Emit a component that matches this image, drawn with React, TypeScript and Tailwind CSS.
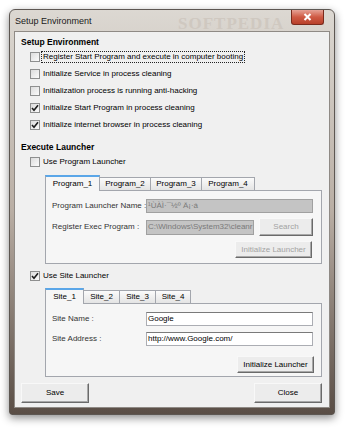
import { ReactNode } from 'react';

const Check = ({ checked }: { checked?: boolean }) => (
    <span className="relative flex size-[10px] shrink-0 items-center justify-center border border-[#8e8f8f] bg-gradient-to-br from-[#dcdcdc] to-[#fbfbfb]">
        {checked && (
            <svg width="8" height="8" viewBox="0 0 8 8" className="absolute">
                <path d="M1 4 L3 6.2 L7 1.2" fill="none" stroke="#1c1c1c" strokeWidth="1.6" />
            </svg>
        )}
    </span>
);

const CheckRow = ({
    label,
    checked,
    focus,
}: {
    label: string;
    checked?: boolean;
    focus?: boolean;
}) => (
    <div className="flex h-[17px] items-center gap-[1px] whitespace-nowrap pl-[15px]">
        <Check checked={checked} />
        <span
            className={
                focus
                    ? 'border border-dotted border-[#222] px-px leading-[10px]'
                    : 'border border-transparent px-px leading-[10px]'
            }
        >
            {label}
        </span>
    </div>
);

const Button = ({
    children,
    disabled,
    className,
}: {
    children: ReactNode;
    disabled?: boolean;
    className: string;
}) => (
    <div
        className={`flex shrink-0 items-center justify-center whitespace-nowrap border border-t-[#f8f8f8] border-l-[#f8f8f8] border-b-[#6a6a6a] border-r-[#6a6a6a] bg-[#ececec] shadow-[inset_-1px_-1px_0_#a8a8a8] ${
            disabled ? 'text-[#a3a3a3]' : 'text-black'
        } ${className}`}
    >
        {children}
    </div>
);

const Tabs = ({ tabs, widths }: { tabs: string[]; widths: string[] }) => (
    <div className="flex h-[15px] items-end">
        {tabs.map((t, i) =>
            i === 0 ? (
                <div
                    key={t}
                    className={`relative z-10 -mb-px flex h-[16px] items-center justify-center border border-b-0 border-[#a3a6ad] border-t-2 border-t-[#5aa6e8] bg-[#f6f6f6] pb-px ${widths[i]}`}
                >
                    {t}
                </div>
            ) : (
                <div
                    key={t}
                    className={`-ml-px flex h-[13px] items-center justify-center border border-b-0 border-[#a3a6ad] bg-gradient-to-b from-[#fbfbfb] to-[#e4e4e4] ${widths[i]}`}
                >
                    {t}
                </div>
            ),
        )}
    </div>
);

const Field = ({
    value,
    disabled,
    className,
}: {
    value: string;
    disabled?: boolean;
    className: string;
}) => (
    <div
        className={`flex min-w-0 items-center overflow-hidden whitespace-nowrap border px-px ${
            disabled
                ? 'border-[#a0a0a0] bg-[#c4c4c4] text-[#7a7a7a]'
                : 'border-[#abadb3] border-t-[#7a7a7a] bg-white text-black'
        } ${className}`}
    >
        {value}
    </div>
);

const Label = ({ children }: { children: ReactNode }) => (
    <span className="overflow-hidden whitespace-nowrap text-[#333]">{children}</span>
);

export default function App() {
    return (
        <div className="h-[431px] w-[350px] overflow-hidden bg-white pl-[9px] pt-[9px] font-['Liberation_Sans',Arial,sans-serif] text-[8px] text-black">
            <div className="flex h-[406px] w-[326px] flex-col rounded-t-[6px] rounded-b-[3px] border border-[#5d5752] bg-gradient-to-b from-[#dcd8d2] via-[#b9aea4] to-[#5a4e46] shadow-[0_3px_9px_rgba(0,0,0,0.45)]">
                <div className="relative flex h-[21px] items-start px-[5px]">
                    <span className="mt-[5px] text-[9px] text-[#1a1a1a]">
                        Setup Environment
                    </span>
                    <span className="absolute left-[168px] top-[1px] text-[17px] font-bold tracking-[1px] text-[#cfc8c0] font-['Liberation_Serif',serif]">
                        SOFTPEDIA
                    </span>
                    <div className="relative ml-auto mr-[5px] flex h-[15px] w-[33px] items-center justify-center rounded-b-[3px] border border-t-0 border-[#7a2a1c] bg-gradient-to-b from-[#e5a195] via-[#cf5a44] to-[#b8402a]">
                        <svg width="9" height="8" viewBox="0 0 9 8">
                            <path d="M1.5 1 L7.5 7 M7.5 1 L1.5 7" stroke="#fff" strokeWidth="2" />
                        </svg>
                    </div>
                </div>

                <div className="mx-[4px] flex h-[377px] flex-col border border-[#8f8a85] bg-[#f0f0f0] pb-[4px] pt-[4px]">
                    <div className="h-[12px] pl-[6px] text-[8.5px] font-bold leading-[12px]">
                        Setup Environment
                    </div>
                    <CheckRow label="Register Start Program and execute in computer booting" focus />
                    <CheckRow label="Initialize Service in process cleaning" />
                    <CheckRow label="Initialization process is running anti-hacking" />
                    <CheckRow label="Initialize Start Program in process cleaning" checked />
                    <CheckRow label="Initialize internet browser in process cleaning" checked />

                    <div className="mt-[8px] h-[12px] pl-[6px] text-[8.5px] font-bold leading-[12px]">
                        Execute Launcher
                    </div>
                    <CheckRow label="Use Program Launcher" />

                    <div className="ml-[30px] mt-[5px] w-[277px]">
                        <Tabs
                            tabs={['Program_1', 'Program_2', 'Program_3', 'Program_4']}
                            widths={['w-[55px]', 'w-[52px]', 'w-[52px]', 'w-[54px]']}
                        />
                        <div className="grid h-[74px] grid-cols-[94px_108px_5px_54px] content-start items-center border border-[#a3a6ad] bg-[#f6f6f6] pl-[6px] pt-[8px]">
                            <Label>Program Launcher Name :</Label>
                            <Field value="¹ÙÀÌ·¯½º Ä¡·á" disabled className="col-span-3 h-[14px] w-[167px]" />
                            <div className="col-span-4 h-[5px]" />
                            <Label>Register Exec Program :</Label>
                            <Field value="C:\Windows\System32\cleanr" disabled className="h-[15px]" />
                            <span />
                            <Button disabled className="h-[18px] w-[54px]">
                                Search
                            </Button>
                            <div className="col-span-4 mt-[5px] flex justify-end pr-[1px]">
                                <Button disabled className="h-[17px] w-[77px]">
                                    Initialize Launcher
                                </Button>
                            </div>
                        </div>
                    </div>

                    <div className="mt-[3px]">
                        <CheckRow label="Use Site Launcher" checked />
                    </div>

                    <div className="ml-[30px] mt-[4px] w-[277px]">
                        <Tabs
                            tabs={['Site_1', 'Site_2', 'Site_3', 'Site_4']}
                            widths={['w-[39px]', 'w-[37px]', 'w-[37px]', 'w-[36px]']}
                        />
                        <div className="grid h-[74px] grid-cols-[94px_167px] content-start items-center gap-y-[6px] border border-[#a3a6ad] bg-[#f6f6f6] pl-[6px] pt-[8px]">
                            <Label>Site Name :</Label>
                            <Field value="Google" className="h-[14px]" />
                            <Label>Site Address :</Label>
                            <Field value="http://www.Google.com/" className="h-[14px]" />
                            <div className="col-span-2 mt-[4px] flex justify-end">
                                <Button className="-mr-[1px] h-[17px] w-[77px]">Initialize Launcher</Button>
                            </div>
                        </div>
                    </div>

                    <div className="mt-[6px] flex items-start justify-between pl-[6px] pr-[7px]">
                        <Button className="h-[20px] w-[68px]">Save</Button>
                        <Button className="h-[20px] w-[68px]">Close</Button>
                    </div>
                </div>
            </div>
        </div>
    );
}
